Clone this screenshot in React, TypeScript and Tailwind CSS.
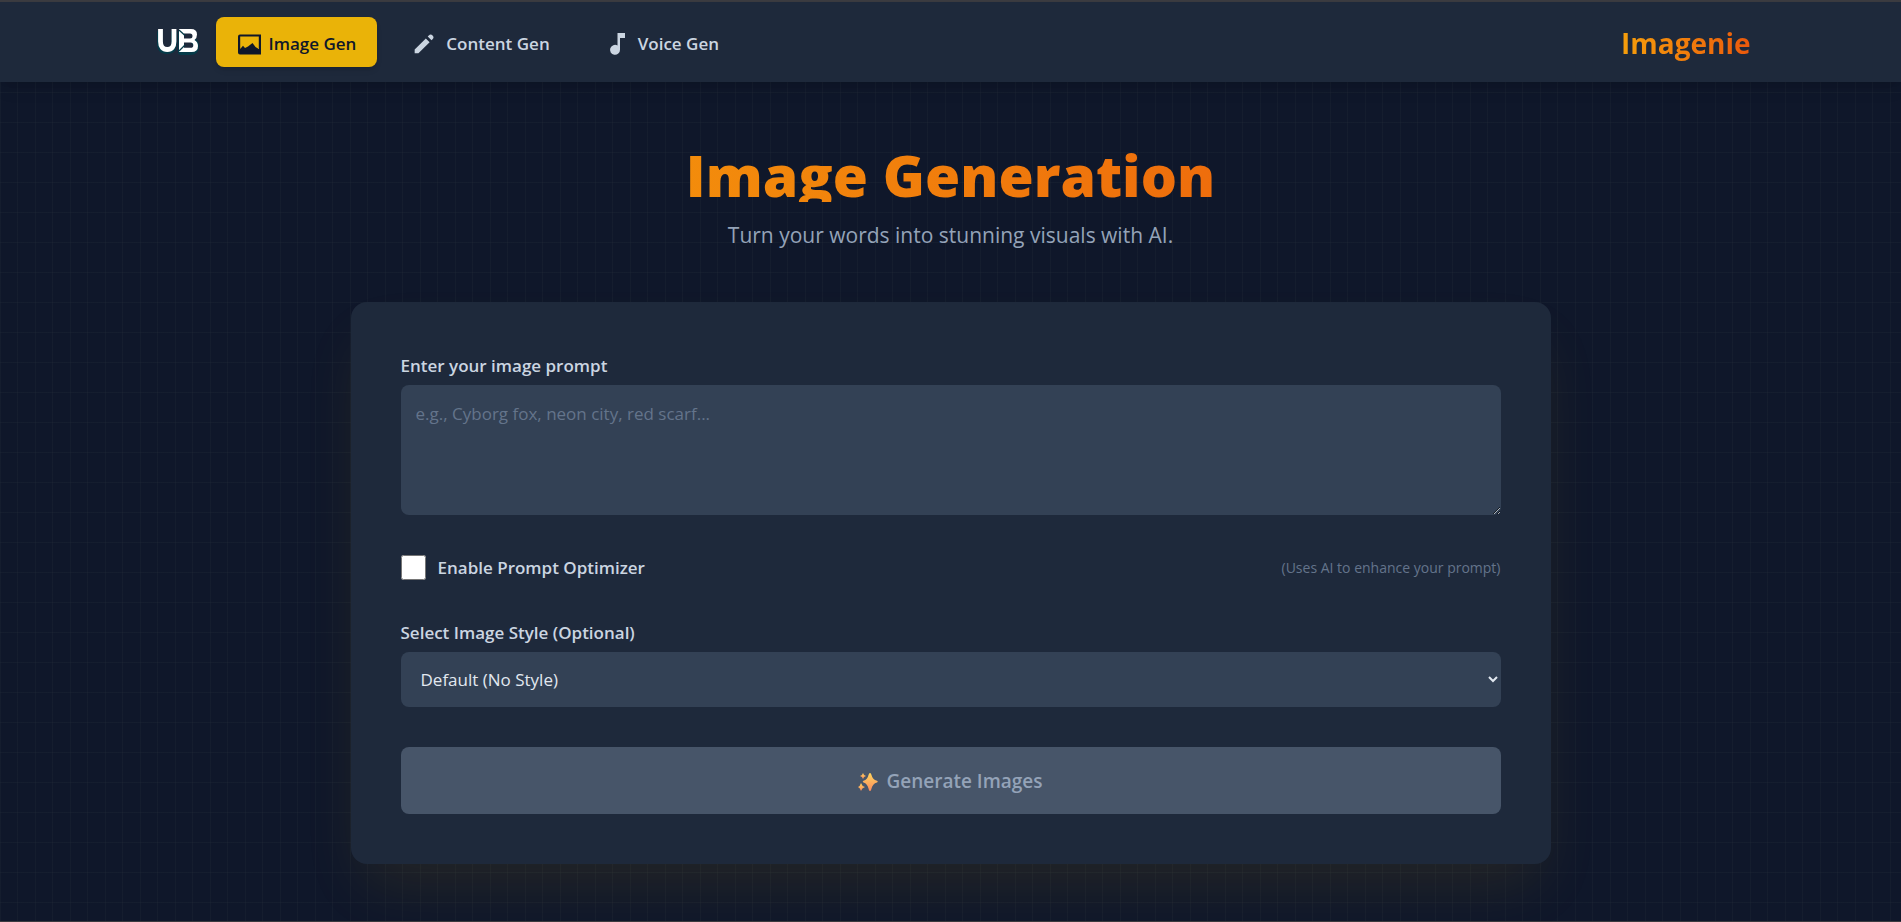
import React, { useState } from "react";

function ImageIcon() {
  return (
    <svg viewBox="0 0 24 21" className="h-[21px] w-6" fill="none" aria-hidden="true">
      <path d="M3 0.500H24V20.500H3Q1 20.500 1 18.500V2.500Q1 0.500 3 0.500ZM3.200 2.500V15L6 11.800L8 14L11 12.500L15.500 9L18.500 13L21.800 15V2.500Z" fill="currentColor" fillRule="evenodd" />
    </svg>
  );
}

function PencilIcon() {
  return (
    <svg viewBox="2.500 2.500 15 15" className="size-5" fill="currentColor" aria-hidden="true">
      <path d="M13.586 3.586a2 2 0 1 1 2.828 2.828l-.793.793-2.828-2.828.793-.793ZM11.379 5.793 3 14.172V17h2.828l8.380-8.379-2.830-2.828Z" />
    </svg>
  );
}

function NoteIcon() {
  return (
    <svg viewBox="0 0 18 24" className="h-6 w-[18px]" fill="currentColor" aria-hidden="true">
      <path d="M9.500 1H17V6H12V17.700A5 5 0 1 1 9.500 13.500Z" />
    </svg>
  );
}

function Logo() {
  return (
    <svg viewBox="0 0 48 32" className="h-8 w-12" fill="none" aria-label="UB" role="img">
      <g stroke="#053b49" strokeWidth="6" strokeLinejoin="round" strokeLinecap="round">
        <path d="M5 7V17Q5 25 12 25Q19 25 19 17V7" />
        <path d="M26 7V26H35Q41 26 41 20Q41 17 39 15.500" />
      </g>
      <path d="M5.500 3V15.500Q5.500 23.500 12.300 23.500Q19 23.500 19 15.500V3" stroke="#fff" strokeWidth="4.800" />
      <path
        d="M24 3H36Q42 3 42 8.500Q42 12 39.500 14Q43 16 43 20Q43 26 36.500 26H24ZM29 7.500V12.500H35Q37.500 12.500 37.500 10Q37.500 7.500 35 7.500ZM29 16.500V21.800H35.500Q38.300 21.800 38.300 19.200Q38.300 16.500 35.500 16.500Z"
        fill="#fff"
        fillRule="evenodd"
      />
      <path d="M24 4L30 9.500M30 19L24 25" stroke="#053b49" strokeWidth="1.300" />
    </svg>
  );
}

function Sparkles() {
  return (
    <svg viewBox="0 0 20 20" className="size-5" aria-hidden="true">
      <defs>
        <linearGradient id="spark" x1="0" y1="0" x2="0" y2="1">
          <stop offset="0" stopColor="#ffd45c" />
          <stop offset="1" stopColor="#f98b5e" />
        </linearGradient>
      </defs>
      <g fill="url(#spark)">
        <path d="M12 1Q13 1 13.500 3Q14.500 7.500 19 8.800Q20.500 9.600 19 10.400Q14.500 11.700 13.500 16.500Q13 19 12 19Q11 19 10.500 16.500Q9.500 11.700 5.500 10.400Q4 9.600 5.500 8.800Q9.500 7.500 10.500 3Q11 1 12 1Z" />
        <path d="M5 1Q5.600 3.400 8 4Q5.600 4.600 5 7Q4.400 4.600 2 4Q4.400 3.400 5 1Z" />
        <path d="M3 11Q3.800 14 7 15Q3.800 16 3 19Q2.200 16 0 15Q2.200 14 3 11Z" />
      </g>
    </svg>
  );
}

const tabs = [
  { label: "Image Gen", icon: <ImageIcon />, pad: "px-[21px] gap-2" },
  { label: "Content Gen", icon: <PencilIcon />, pad: "px-[21px] gap-3" },
  { label: "Voice Gen", icon: <NoteIcon />, pad: "px-[21px] gap-3" },
];

export default function App() {
  const [active, setActive] = useState("Image Gen");
  const [prompt, setPrompt] = useState("");
  const [optimize, setOptimize] = useState(false);

  return (
    <div className="flex min-h-screen flex-col border-t-2 border-b border-[#3b3b40] bg-[#0f172a] bg-[linear-gradient(to_right,#4f5f5f16_1px,transparent_1px_17px,#4f5f5f16_17px_18px,transparent_18px),linear-gradient(to_bottom,#4f5f5f16_1px,transparent_1px)] bg-[size:35px_30px] font-['Open_Sans','Noto_Sans',sans-serif] text-[#e2e8f0]">
      <header className="bg-[#1e293b] shadow-lg">
        <div className="mx-auto flex h-20 max-w-[1600px] items-center justify-between">
          <nav className="flex items-center">
            <a href="#home" className="mr-[13px] ml-1 block">
              <Logo />
            </a>
            <div className="flex gap-4">
              {tabs.map((t) => (
                <button
                  key={t.label}
                  type="button"
                  onClick={() => setActive(t.label)}
                  className={`flex h-[50px] items-center rounded-lg pt-1 text-[17px] font-semibold ${t.pad} ${
                    active === t.label ? "bg-[#eab308] text-[#0f172a] shadow-md" : "text-[#cbd5e1]"
                  }`}
                >
                  {t.icon}
                  {t.label}
                </button>
              ))}
            </div>
          </nav>
          <span className="bg-linear-to-r from-[#f59e0b] to-[#ea580c] bg-clip-text pt-0.5 text-[28px] font-bold text-transparent">
            Imagenie
          </span>
        </div>
      </header>

      <main className="mx-auto w-full max-w-[1200px] pt-[60px]">
        <div className="mb-[50px] text-center">
          <h1 className="bg-linear-to-r from-[#f59e0b] to-[#ea580c] bg-clip-text pt-[6px] text-[57px] leading-[54px] font-extrabold text-transparent">
            Image Generation
          </h1>
          <p className="mt-4 text-[21px] leading-[34px] text-[#94a3b8]">
            Turn your words into stunning visuals with AI.
          </p>
        </div>

        <form
          className="rounded-2xl bg-[#1e293b] p-[50px] shadow-[0_31px_62px_-12px_rgba(234,179,8,0.1)]"
          onSubmit={(e) => e.preventDefault()}
        >
          <label htmlFor="prompt" className="mb-1.5 block text-[17px] leading-[27px] font-semibold text-[#cbd5e1]">
            Enter your image prompt
          </label>
          <textarea
            id="prompt"
            value={prompt}
            onChange={(e) => setPrompt(e.target.value)}
            placeholder="e.g., Cyborg fox, neon city, red scarf..."
            className="block h-[130px] w-full resize-y rounded-lg bg-[#334155] p-[15px] text-[17px] leading-[28px] text-[#e2e8f0] placeholder:text-[#64748b]"
          />

          <div className="mt-10 flex items-center justify-between">
            <div className="flex items-center gap-3">
              <input
                id="optimizer"
                type="checkbox"
                checked={optimize}
                onChange={(e) => setOptimize(e.target.checked)}
                className="size-[25px] accent-yellow-500"
              />
              <label htmlFor="optimizer" className="text-[17px] leading-[25px] font-semibold text-[#cbd5e1]">
                Enable Prompt Optimizer
              </label>
            </div>
            <span className="text-sm text-[#64748b]">(Uses AI to enhance your prompt)</span>
          </div>

          <label htmlFor="style" className="mt-[39px] mb-1.5 block text-[17px] leading-[27px] font-semibold text-[#cbd5e1]">
            Select Image Style (Optional)
          </label>
          <select id="style" className="block h-[55px] w-full rounded-lg bg-[#334155] px-4 text-[17px] text-[#e2e8f0]">
            <option>Default (No Style)</option>
            <option>Photorealistic</option>
            <option>Anime</option>
          </select>

          <button
            type="submit"
            disabled={!prompt}
            className="mt-10 flex h-[67px] w-full items-center justify-center gap-2 rounded-lg bg-[#475569] pt-0.5 text-[19px] font-semibold text-[#94a3b8]"
          >
            <Sparkles />
            Generate Images
          </button>
        </form>
      </main>
    </div>
  );
}
